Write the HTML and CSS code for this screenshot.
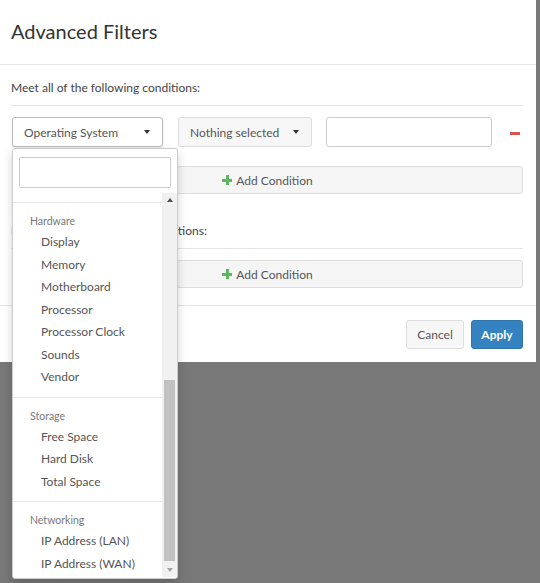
FILE: index.html
```html
<!DOCTYPE html>
<html>
<head>
<meta charset="utf-8">
<link rel="stylesheet" href="styles.css">
</head>
<body>
<div class="modal">
  <div class="modal-header">
    <h1 class="modal-title">Advanced Filters</h1>
  </div>
  <div class="modal-body">
    <div class="section first">
      <div class="section-title">Meet all of the following conditions:</div>
      <div class="cond-row">
        <div class="select-wrap">
          <button class="select active"><span>Operating System</span><span class="caret"></span></button>
          <div class="dropdown">
            <div class="search"><input class="search-input" type="text"></div>
            <div class="list-area">
              <div class="list">
                <div class="divider top"></div>
                <div class="group-header">Hardware</div>
                <div class="item">Display</div>
                <div class="item">Memory</div>
                <div class="item">Motherboard</div>
                <div class="item">Processor</div>
                <div class="item">Processor Clock</div>
                <div class="item">Sounds</div>
                <div class="item">Vendor</div>
                <div class="divider"></div>
                <div class="group-header">Storage</div>
                <div class="item">Free Space</div>
                <div class="item">Hard Disk</div>
                <div class="item">Total Space</div>
                <div class="divider"></div>
                <div class="group-header">Networking</div>
                <div class="item">IP Address (LAN)</div>
                <div class="item">IP Address (WAN)</div>
              </div>
              <div class="scrollbar">
                <div class="arrow up"></div>
                <div class="track"><div class="thumb"></div></div>
                <div class="arrow down"></div>
              </div>
            </div>
          </div>
        </div>
        <button class="select second"><span>Nothing selected</span><span class="caret"></span></button>
        <input class="value-input" type="text">
        <span class="remove"></span>
      </div>
      <div class="add-cond"><span class="plus"></span>Add Condition</div>
    </div>
    <div class="section second-sec">
      <div class="section-title">Meet any of the following conditions:</div>
      <div class="add-cond near"><span class="plus"></span>Add Condition</div>
    </div>
  </div>
  <div class="modal-footer">
    <button class="btn cancel">Cancel</button>
    <button class="btn apply">Apply</button>
  </div>
</div>
</body>
</html>
```
FILE: styles.css
```css
* { box-sizing: border-box; }
html, body { margin: 0; padding: 0; }
body {
  background: #787878;
  font-family: "Lato", "Noto Sans", sans-serif;
  color: #333;
  width: 540px;
  height: 583px;
  overflow: hidden;
}
.modal {
  width: 536px;
  background: #fff;
  position: relative;
}
.modal-header {
  height: 65px;
  border-bottom: 1px solid #e5e5e5;
  padding: 0 11px;
  display: flex;
  align-items: center;
}
.modal-title {
  margin: 0;
  font-size: 20px;
  font-weight: 400;
  color: #333;
  line-height: 28px;
  padding-bottom: 2px;
}
.modal-body {
  padding: 0 13px 17px 12px;
  border-bottom: 1px solid #e5e5e5;
}
.section.first { padding-top: 13px; }
.section.second-sec { padding-top: 27px; }
.section-title {
  font-size: 12px;
  line-height: 20px;
  color: #444;
  padding-bottom: 7px;
  border-bottom: 1px solid #e5e5e5;
  margin-left: -1px;
}
.cond-row {
  display: flex;
  align-items: center;
  margin-top: 11px;
  height: 30px;
}
.select-wrap { position: relative; }
.select {
  height: 30px;
  display: flex;
  align-items: center;
  justify-content: space-between;
  font-family: inherit;
  font-size: 12px;
  color: #555;
  border: 1px solid #ddd;
  border-radius: 3px;
  background: #f7f7f7;
  padding: 0 12px 0 11px;
  margin: 0;
}
.select.active {
  width: 151px;
  background: #fff;
  border-color: #bbb;
  box-shadow: 0 1px 2px rgba(0,0,0,0.12);
}
.select.second {
  width: 134px;
  margin-left: 15px;
}
.caret {
  width: 0;
  height: 0;
  border-left: 3.5px solid transparent;
  border-right: 3.5px solid transparent;
  border-top: 4px solid #333;
}
.value-input {
  width: 166px;
  height: 30px;
  margin-left: 14px;
  border: 1px solid #ccc;
  border-radius: 3px;
  padding: 0;
}
.remove {
  width: 10px;
  height: 3px;
  background: #d9534f;
  margin-left: 18px;
  margin-top: 2px;
}
.add-cond {
  margin-top: 19px;
  height: 28px;
  background: #f5f5f5;
  border: 1px solid #ddd;
  border-radius: 3px;
  display: flex;
  align-items: center;
  justify-content: center;
  font-size: 12px;
  color: #555;
}
.add-cond.near { margin-top: 11px; }
.plus {
  position: relative;
  width: 10px;
  height: 10px;
  margin-right: 4px;
}
.plus::before, .plus::after {
  content: "";
  position: absolute;
  background: #5cb85c;
}
.plus::before { left: 0; top: 3.5px; width: 10px; height: 3px; }
.plus::after { left: 3.5px; top: 0; width: 3px; height: 10px; }
.modal-footer {
  display: flex;
  justify-content: flex-end;
  gap: 7px;
  padding: 14px 13px 13px 0;
}
.btn {
  height: 29px;
  font-family: inherit;
  font-size: 12px;
  border-radius: 3px;
  padding: 0 11px;
  margin: 0;
}
.btn.cancel {
  background: #f7f7f7;
  border: 1px solid #ddd;
  color: #555;
  width: 58px;
  padding: 0;
}
.btn.apply {
  background: #3582c0;
  border: 1px solid #2f74ab;
  color: #fff;
  font-weight: 700;
  width: 52px;
  padding: 0;
}
/* dropdown */
.dropdown {
  position: absolute;
  left: 0;
  top: 31px;
  width: 166px;
  height: 431px;
  background: #fff;
  border: 1px solid #ccc;
  border-radius: 3px;
  box-shadow: 0 4px 10px rgba(0,0,0,0.18);
  z-index: 10;
  display: flex;
  flex-direction: column;
}
.search { padding: 8px 6px 5px 6px; }
.search-input {
  display: block;
  width: 152px;
  height: 31px;
  border: 1px solid #ccc;
  border-radius: 2px;
  padding: 0;
  margin: 0;
}
.list-area {
  display: flex;
  height: 384px;
}
.list {
  width: 149px;
  overflow: hidden;
}
.divider {
  height: 1px;
  background: #e5e5e5;
  margin: 8px 0 8px 0;
}
.divider.top { margin-top: 9px; }
.group-header {
  font-size: 10.5px;
  line-height: 20px;
  height: 20px;
  color: #777;
  padding-left: 17px;
}
.item {
  font-size: 12px;
  height: 22.5px;
  line-height: 22.5px;
  color: #555;
  padding-left: 28px;
  white-space: nowrap;
}
.scrollbar {
  width: 15px;
  background: #f1f1f1;
  display: flex;
  flex-direction: column;
  align-items: center;
  height: 384px;
}
.arrow {
  width: 0;
  height: 0;
  border-left: 3.5px solid transparent;
  border-right: 3.5px solid transparent;
  margin: 5px 0;
}
.arrow.up { border-bottom: 4px solid #505050; }
.arrow.down { border-top: 4px solid #a3a3a3; }
.track {
  flex: 1;
  width: 100%;
  position: relative;
}
.thumb {
  position: absolute;
  left: 2px;
  right: 2px;
  bottom: 2px;
  height: 181px;
  background: #c1c1c1;
}
```
